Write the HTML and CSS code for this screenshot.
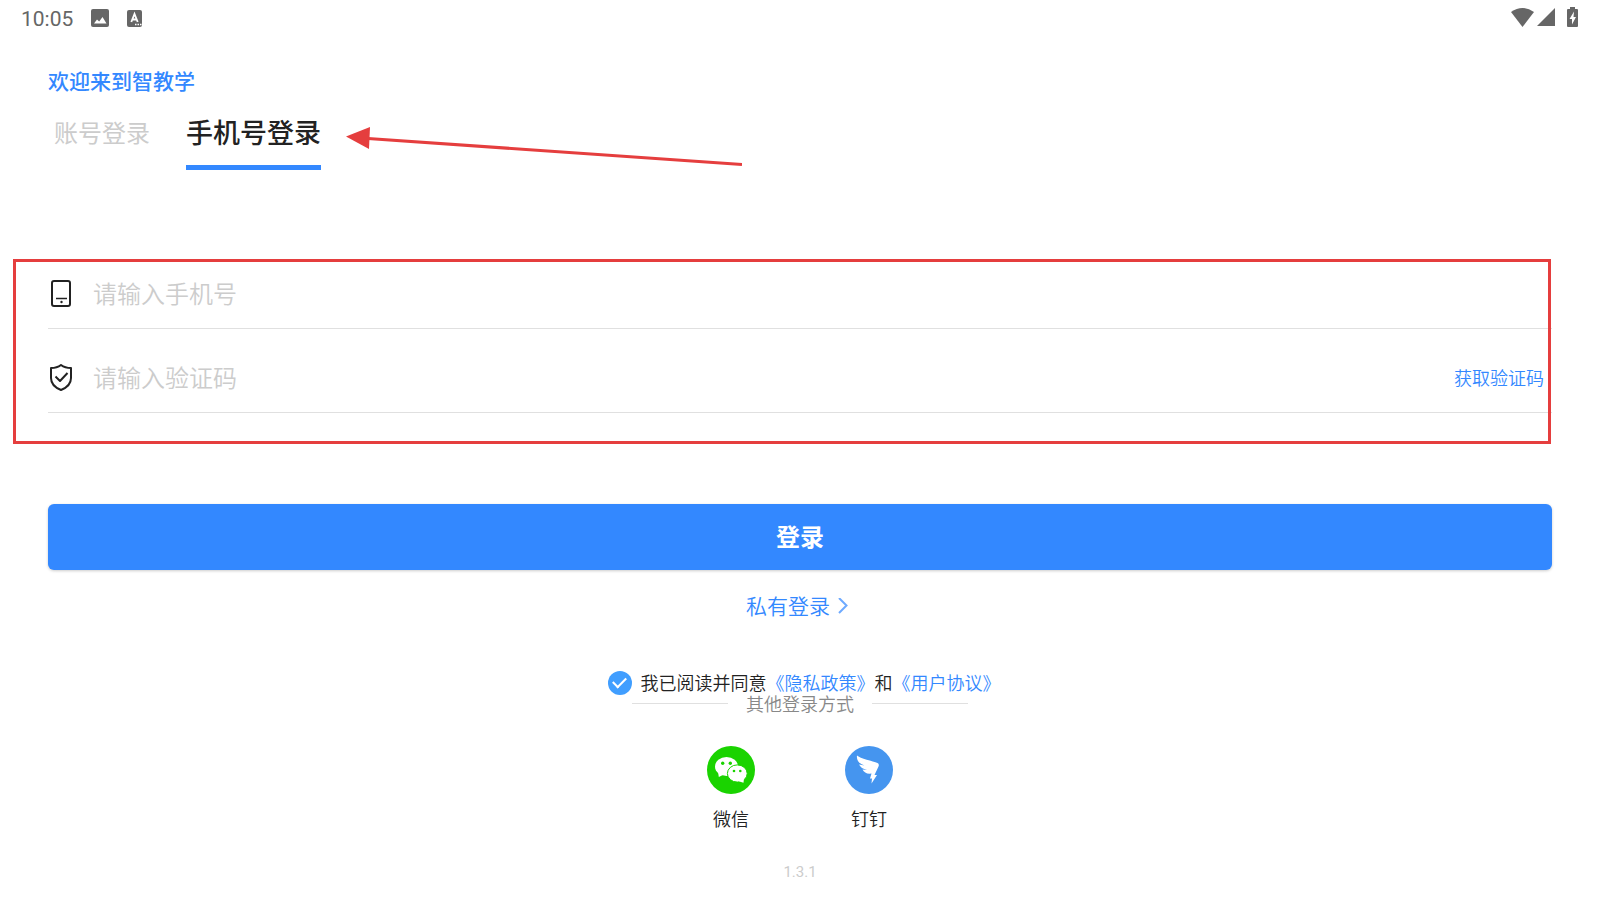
FILE: index.html
```
<!DOCTYPE html>
<html lang="zh-CN">
<head>
    <meta charset="UTF-8">
    <meta name="viewport" content="width=device-width, initial-scale=1.0">
    <title>智教学 - 登录</title>
    <link rel="stylesheet" href="styles.css">
</head>
<body>
    <header class="status-bar">
        <div class="status-left">
            <span class="time">10:05</span>
            <svg class="picture-icon" width="18" height="18" viewBox="0 0 18 18">
                <rect width="18" height="18" rx="2" fill="#666"/>
                <path d="M3 14.500l3-4 2.200 2L11.500 8 15.500 14.500z" fill="#fff"/>
            </svg>
            <svg width="15" height="17" viewBox="0 0 15 17">
                <rect width="15" height="17" rx="2" fill="#666"/>
                <path d="M4.300 12L7.500 4l3.200 8M5.500 9.500h4" fill="none" stroke="#fff" stroke-width="1.800"/>
                <path d="M8 14.500h1.500M10.500 14.500H12M13 14.500h1.500" stroke="#fff" stroke-width="1.500"/>
            </svg>
        </div>
        <div class="status-right">
            <svg width="23" height="19" viewBox="0 0 23 19">
                <path d="M0 4Q11.500-4 23 4L11.500 19z" fill="#666"/>
            </svg>
            <svg width="18" height="18" viewBox="0 0 18 18">
                <path d="M18 0v18H0z" fill="#666"/>
            </svg>
            <svg class="battery-icon" width="11" height="20" viewBox="0 0 11 20">
                <path d="M3 0h5v2h2a1 1 0 0 1 1 1v16a1 1 0 0 1-1 1H1a1 1 0 0 1-1-1V3a1 1 0 0 1 1-1h2z" fill="#666"/>
                <path d="M7 4.500L2.500 12H5v5.500l4-7.500H6.500z" fill="#fff"/>
            </svg>
        </div>
    </header>

    <main class="login">
        <h1 class="welcome">欢迎来到智教学</h1>

        <nav class="tabs">
            <button type="button" class="tab">账号登录</button>
            <button type="button" class="tab active">手机号登录</button>
            <svg class="arrow" width="396" height="40" viewBox="0 0 396 40">
                <path d="M22 11.500L396 37.500" stroke="#e53e3e" stroke-width="3"/>
                <path d="M0 9.500L24 0 23 22z" fill="#e53e3e"/>
            </svg>
        </nav>

        <form>
            <div class="fields">
                <div class="field">
                    <label for="phone" aria-label="手机号">
                        <svg width="24" height="28" viewBox="0 0 24 28" fill="none" stroke="#222" stroke-width="2">
                            <rect x="4" y="1" width="18" height="25" rx="2"/>
                            <path d="M8 18.500h11" stroke-width="1.500"/>
                            <circle cx="13.500" cy="22" r="1.200" fill="#222" stroke="none"/>
                        </svg>
                    </label>
                    <input type="tel" id="phone" name="phone" placeholder="请输入手机号">
                </div>
                <div class="field">
                    <label for="code" aria-label="验证码">
                        <svg width="24" height="28" viewBox="0 0 24 28" fill="none" stroke="#222" stroke-width="2" stroke-linejoin="round">
                            <path d="M13 1Q17 4 23 4V14Q23 22 13 26 3 22 3 14V4Q9 4 13 1z"/>
                            <path d="M7.500 12.500L12 17 19.500 9"/>
                        </svg>
                    </label>
                    <input type="text" id="code" name="code" placeholder="请输入验证码">
                    <button type="button" class="get-code">获取验证码</button>
                </div>
                <div class="frame"></div>
            </div>

            <button type="submit" class="submit">登录</button>

            <div class="private">
                <a href="#">私有登录
                    <svg width="10" height="18" viewBox="0 0 10 18" fill="none" stroke="#6eaaff" stroke-width="2">
                        <path d="M1 0L8.500 7.500 1 15"/>
                    </svg>
                </a>
            </div>

            <div class="agreement">
                <input type="checkbox" id="agree" checked>
                <div class="agree-text"><label for="agree">我已阅读并同意</label><a href="#">《隐私政策》</a>和<a href="#">《用户协议》</a></div>
            </div>
        </form>

        <div class="other-title"><span>其他登录方式</span></div>

        <div class="others">
            <button type="button" class="other">
                <svg width="48" height="48" viewBox="0 0 48 48">
                    <circle cx="24" cy="24" r="24" fill="#1ad300"/>
                    <ellipse cx="19.500" cy="20.500" rx="11.500" ry="9.500" fill="#fff"/>
                    <path d="M11 25l.8 6 6-3z" fill="#fff"/>
                    <circle cx="15.700" cy="17.300" r="1.700" fill="#1ad300"/>
                    <circle cx="23.300" cy="17.300" r="1.700" fill="#1ad300"/>
                    <ellipse cx="30.300" cy="27.500" rx="9.900" ry="8.600" fill="#fff" stroke="#1ad300"/>
                    <path d="M37 32l-.5 4.800-5-1.500z" fill="#fff"/>
                    <circle cx="27" cy="25" r="1.300" fill="#1ad300"/>
                    <circle cx="33.300" cy="25" r="1.300" fill="#1ad300"/>
                </svg>
                <span>微信</span>
            </button>
            <button type="button" class="other">
                <svg width="48" height="48" viewBox="0 0 48 48">
                    <circle cx="24" cy="24" r="24" fill="#4595ef"/>
                    <path d="M12 9.500C15 12.500 28 15 32.500 17Q34.500 18 33.500 20.500L29.500 29H32L26.500 37.500 27 32.500H25L26.500 27.500Q20 28.500 17.500 23.500L22 24Q16 22.500 14 18.500L19.500 19.500Q11 16.500 12 9.500z" fill="#fff"/>
                </svg>
                <span>钉钉</span>
            </button>
        </div>
    </main>

    <footer class="version">1.3.1</footer>
</body>
</html>
```
FILE: styles.css
```
* {
    box-sizing: border-box;
}

body {
    font-family: Roboto, "Noto Sans CJK SC", sans-serif;
    font-size: 18px;
    font-weight: 350;
    margin: 0;
    background-color: #fff;
    color: #222;
}

button,
input {
    font: inherit;
    color: inherit;
    background: none;
    border: none;
    margin: 0;
    padding: 0;
}

button {
    cursor: pointer;
}

svg {
    display: block;
    flex: none;
}

a {
    color: #3388ff;
    text-decoration: none;
}

.status-bar {
    display: flex;
    justify-content: space-between;
    height: 36px;
    padding: 0 22px 0 21px;
}

.status-left,
.status-right {
    display: flex;
    align-items: center;
}

.time {
    padding-top: 2px;
    color: #666;
    font-size: 21px;
    font-weight: 450;
    line-height: 36px;
}

.status-left {
    gap: 18px;
}

.status-right {
    gap: 3px;
    padding-bottom: 2px;
}

.battery-icon {
    margin-left: 9px;
}

.login {
    padding: 30px 48px 0;
}

.welcome {
    margin: 0;
    color: #3388ff;
    font-size: 21px;
    font-weight: 500;
    line-height: 32px;
}

.tabs {
    display: flex;
    gap: 36px;
    position: relative;
    margin-top: 12px;
    padding-left: 6px;
}

.tab {
    height: 60px;
    padding-bottom: 13px;
    border-bottom: 5px solid transparent;
    color: #ccc;
    font-size: 24px;
    font-weight: 400;
}

.tab.active {
    border-bottom-color: #3388ff;
    color: #222;
    font-size: 27px;
    font-weight: 500;
}

.arrow {
    position: absolute;
    left: 298px;
    top: 17px;
}

.fields {
    position: relative;
    display: flex;
    flex-direction: column;
    gap: 14px;
    margin-top: 89px;
    padding-bottom: 31px;
}

.field {
    display: flex;
    align-items: center;
    gap: 21px;
    height: 70px;
    border-bottom: 1px solid #e0e0e0;
}

.field input {
    flex: 1;
    min-width: 0;
    height: 60px;
    padding-top: 2px;
    font-size: 24px;
    outline: none;
}

.field input::placeholder {
    color: #ccc;
    opacity: 1;
}

.get-code {
    padding: 0 8px 2px 0;
    color: #3388ff;
}

.frame {
    position: absolute;
    inset: 0 1px 0 -35px;
    border: 3px solid #e53e3e;
    pointer-events: none;
}

.submit {
    display: block;
    width: 100%;
    height: 66px;
    margin-top: 60px;
    padding-bottom: 4px;
    border-radius: 6px;
    background-color: #3388ff;
    box-shadow: 0 1px 3px rgba(0, 0, 0, 0.2);
    color: #fff;
    font-size: 24px;
    font-weight: 700;
}

.private {
    display: flex;
    justify-content: center;
    margin-top: 21px;
    padding-right: 6px;
}

.private a {
    display: flex;
    align-items: center;
    gap: 8px;
    font-size: 21px;
    line-height: 32px;
}

.agreement {
    display: flex;
    justify-content: center;
    align-items: center;
    gap: 9px;
    height: 24px;
    margin-top: 48px;
    padding-left: 8px;
}

.agreement input {
    appearance: none;
    display: grid;
    place-items: center;
    width: 24px;
    height: 24px;
    border-radius: 50%;
    background-color: #409eff;
}

.agreement input:checked::after {
    content: "";
    width: 11px;
    height: 6px;
    margin-bottom: 4px;
    border-left: 2px solid #fff;
    border-bottom: 2px solid #fff;
    transform: rotate(-45deg);
}

.agree-text {
    padding-top: 2px;
    line-height: 24px;
}

.other-title {
    display: flex;
    justify-content: center;
    gap: 18px;
    color: #888;
    line-height: 20px;
}

.other-title::before,
.other-title::after {
    content: "";
    width: 96px;
    height: 1px;
    margin-top: 8px;
    background-color: #e0e0e0;
}

.others {
    display: flex;
    justify-content: center;
    gap: 90px;
    margin-top: 31px;
}

.other {
    display: flex;
    flex-direction: column;
    align-items: center;
    gap: 13px;
    width: 48px;
    line-height: 26px;
}

.version {
    margin-top: 29px;
    color: #ccc;
    font-size: 15px;
    font-weight: 400;
    line-height: 20px;
    text-align: center;
}
```
